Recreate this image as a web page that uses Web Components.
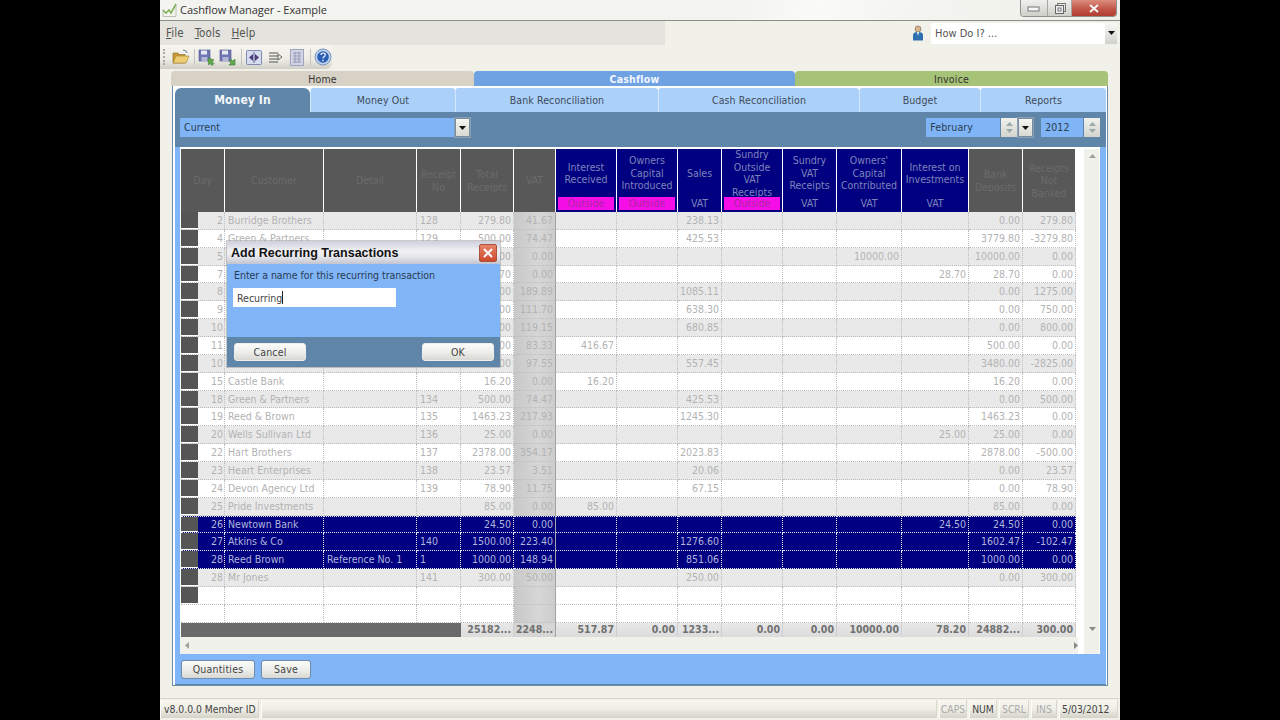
<!DOCTYPE html>
<html>
<head>
<meta charset="utf-8">
<title>Cashflow Manager</title>
<style>
html, body { margin: 0; padding: 0; background: #000; height: 720px; overflow: hidden; }
body { display: flex; justify-content: center; }
</style>
</head>
<body>
<cf-window>
  <cf-titlebar title="Cashflow Manager - Example"></cf-titlebar>
  <cf-menubar></cf-menubar>
  <cf-toolbar></cf-toolbar>
  <cf-modules></cf-modules>
  <cf-panel>
    <cf-subtabs></cf-subtabs>
    <cf-filterbar></cf-filterbar>
    <cf-grid></cf-grid>
    <cf-footer>
      <cf-button style="width:74px">Quantities</cf-button>
      <cf-button style="width:50px">Save</cf-button>
    </cf-footer>
  </cf-panel>
  <cf-status></cf-status>
  <cf-dialog heading="Add Recurring Transactions"></cf-dialog>
</cf-window>

<script>
// Shared look
const FONT = `"DejaVu Sans", "Liberation Sans", sans-serif`;
const ARROW_DOWN = `<svg width="7" height="4" viewBox="0 0 7 4"><path d="M0 0h7L3.5 4z" fill="#111"/></svg>`;

class CfWindow extends HTMLElement {
    constructor() {
        super();
        this.attachShadow({ mode: 'open' });
        this.shadowRoot.innerHTML = `
            <style>
                :host {
                    display: flex;
                    flex-direction: column;
                    position: relative;
                    width: 960px;
                    height: 720px;
                    background: #f2f1e9;
                    font-family: ${FONT};
                    font-stretch: condensed;
                    font-size: 10.5px;
                    color: #444;
                    overflow: hidden;
                }
            </style>
            <slot></slot>
        `;
    }
}

class CfTitlebar extends HTMLElement {
    constructor() {
        super();
        this.attachShadow({ mode: 'open' });
    }

    connectedCallback() {
        this.shadowRoot.innerHTML = `
            <style>
                :host {
                    display: flex;
                    align-items: flex-start;
                    height: 20px;
                    flex: none;
                    border-bottom: 1px solid #8c8c88;
                    background: linear-gradient(115deg, #f3f3ef 0 60%, #fafaf8 68%, #f4f4f0 78%, #efefea 100%);
                }
                .icon { margin: 3px 0 0 2px; width: 15px; height: 14px; flex: none; }
                .name {
                    margin: 2px 0 0 3px;
                    font: 11px/16px "Open Sans", sans-serif;
                    color: #333;
                    letter-spacing: -0.05px;
                }
                .controls {
                    display: flex;
                    margin-left: auto;
                    margin-right: 3px;
                    height: 16px;
                    border: 1px solid #8f8f8f;
                    border-top: none;
                    border-radius: 0 0 4px 4px;
                    overflow: hidden;
                }
                .controls div {
                    display: flex;
                    align-items: center;
                    justify-content: center;
                    background: linear-gradient(#f0f0ec, #cfcfca);
                    border-right: 1px solid #a5a5a2;
                }
                .min { width: 26px; }
                .max { width: 23px; }
                .controls .close {
                    width: 44px;
                    border: none;
                    background: linear-gradient(#dc8d7e, #c2574a 55%, #b03c30);
                }
            </style>
            <svg class="icon" viewBox="0 0 15 14">
                <path d="M1 13.5V7M1 13.5h13V2" fill="none" stroke="#bcbcb8"/>
                <path d="M1 7l3 3 3-3 2 3 5-9" fill="none" stroke="#7fb35a" stroke-width="1.6"/>
            </svg>
            <div class="name">${this.getAttribute('title')}</div>
            <div class="controls">
                <div class="min"><svg width="14" height="8"><rect x="1" y="3" width="11" height="4" fill="#f6f6f6" stroke="#777"/></svg></div>
                <div class="max"><svg width="12" height="11"><rect x="3.5" y=".5" width="8" height="8" fill="none" stroke="#777"/><rect x="1.5" y="2.5" width="8" height="8" fill="#eee" stroke="#666"/><rect x="4" y="5" width="3" height="3" fill="none" stroke="#777"/></svg></div>
                <div class="close"><svg width="12" height="9"><path d="M2 1l8 7M10 1l-8 7" stroke="#f4f4f4" stroke-width="2"/></svg></div>
            </div>
        `;
    }
}

class CfMenubar extends HTMLElement {
    constructor() {
        super();
        this.attachShadow({ mode: 'open' });
        this.shadowRoot.innerHTML = `
            <style>
                :host {
                    display: flex;
                    height: 24px;
                    flex: none;
                }
                .menus {
                    display: flex;
                    width: 505px;
                    flex: none;
                    padding-left: 6px;
                    box-sizing: border-box;
                    gap: 11px;
                    align-items: center;
                    background: #e4e3dd;
                    font-size: 11.5px;
                    letter-spacing: .1px;
                    color: #555;
                }
                u { text-decoration: underline; }
                .how {
                    display: flex;
                    flex: 1;
                    align-items: center;
                    background: #f2f1e9;
                }
                .person { margin-left: 246px; width: 14px; height: 16px; }
                .combo {
                    display: flex;
                    align-items: center;
                    margin-left: 6px;
                    width: 186px;
                    height: 21px;
                    background: #fff;
                    padding-left: 4px;
                    box-sizing: border-box;
                    font-size: 11px;
                    color: #555;
                }
                .arrow {
                    margin-left: auto;
                    width: 12px;
                    height: 21px;
                    display: flex;
                    align-items: center;
                    justify-content: center;
                    background: linear-gradient(#f8f8f6, #d2d2cc);
                }
            </style>
            <div class="menus">
                <span><u>F</u>ile</span><span><u>T</u>ools</span><span><u>H</u>elp</span>
            </div>
            <div class="how">
                <svg class="person" viewBox="0 0 14 16">
                    <circle cx="7" cy="4" r="3" fill="#d9b48c" stroke="#7a6248" stroke-width=".6"/>
                    <path d="M2 15.5V10q0-3 5-3t5 3v5.5z" fill="#2f6fb0"/>
                    <path d="M6 7h2l-1 4z" fill="#fff"/>
                </svg>
                <div class="combo">How Do I? ...<div class="arrow">${ARROW_DOWN}</div></div>
            </div>
        `;
    }
}

class CfToolbar extends HTMLElement {
    constructor() {
        super();
        this.attachShadow({ mode: 'open' });
        const saveIcon = (arrow) => `
            <svg width="18" height="17" viewBox="0 0 18 17">
                <rect x="1" y="1" width="11" height="11" fill="#6f76b4" stroke="#50558e" stroke-width=".6"/>
                <rect x="3" y="1.5" width="6" height="4" fill="#e6e8f2"/>
                <rect x="3.5" y="8" width="6" height="4" fill="#b4b8d6"/>
                <path d="${arrow}" fill="#5fa84c" stroke="#3d7c30" stroke-width=".6"/>
            </svg>`;
        this.shadowRoot.innerHTML = `
            <style>
                :host {
                    display: flex;
                    flex: none;
                    align-self: flex-start;
                    align-items: center;
                    box-sizing: border-box;
                    width: 172px;
                    height: 24px;
                    padding-left: 3px;
                    gap: 3px;
                    border-radius: 0 0 6px 0;
                    background: linear-gradient(#f6f5ef, #ecebe4 60%, #cfcfc8);
                }
                .grip { width: 2px; height: 16px; border-left: 2px dotted #aaa; margin-right: 3px; }
                .sep { width: 1px; height: 16px; background: #c4c4bc; margin: 0 1px; }
                svg { flex: none; }
            </style>
            <div class="grip"></div>
            <svg width="18" height="16" viewBox="0 0 18 16">
                <path d="M1 4h5l1 1.5h6V14H1z" fill="#c99a38" stroke="#8a6a20" stroke-width=".6"/>
                <path d="M11 1l3 1 1 2" fill="none" stroke="#6a7a90"/>
                <path d="M4 7h13l-3 7H1z" fill="#f0cd74" stroke="#a37f2c" stroke-width=".6"/>
            </svg>
            <div class="sep"></div>
            ${saveIcon('M10 9l6 2-2 1.5 2 2-2 2-2-2-1.5 1.5z')}
            ${saveIcon('M16 10v6h-6l2-2-2-2 2-1.5 2 1.5z')}
            <div class="sep"></div>
            <svg width="16" height="15" viewBox="0 0 16 15">
                <rect x=".5" y=".5" width="15" height="14" rx="1" fill="#d6dcef" stroke="#8089b4"/>
                <path d="M8 2v11" stroke="#5b648f"/>
                <path d="M7 4v7L3 7.5zM9 4v7l4-3.5z" fill="#4a3d7a"/>
            </svg>
            <svg style="margin-left:3px" width="15" height="15" viewBox="0 0 15 15">
                <path d="M1 3h9M1 6h9M1 9h9M1 12h9" stroke="#555" fill="none"/>
                <path d="M10 4l4 3-4 3z" fill="#eee" stroke="#333" stroke-width=".7"/>
            </svg>
            <svg style="margin-left:4px" width="14" height="17" viewBox="0 0 14 17">
                <rect x=".5" y=".5" width="13" height="16" fill="#d2d4e6" stroke="#a0a3bd"/>
                <path d="M3 4h8M3 7h8M3 10h8M3 13h8M5 3v11M9 3v11" stroke="#8f92b0" stroke-width=".8"/>
            </svg>
            <div class="sep" style="margin-left:3px"></div>
            <svg width="18" height="18" viewBox="0 0 18 18">
                <circle cx="9" cy="9" r="8" fill="#bcd0ea" stroke="#7d98bf"/>
                <circle cx="9" cy="9" r="5.8" fill="#2a5fb4"/>
                <path d="M7 7q0-2 2.2-2T11.2 7q0 1.2-1.2 1.8T9 10.5" fill="none" stroke="#fff" stroke-width="1.2"/>
                <circle cx="9" cy="12.5" r=".8" fill="#fff"/>
            </svg>
        `;
    }
}

class CfModules extends HTMLElement {
    constructor() {
        super();
        this.attachShadow({ mode: 'open' });
        this.shadowRoot.innerHTML = `
            <style>
                :host {
                    display: grid;
                    flex: none;
                    grid-template-columns: 303px 321px 313px;
                    height: 15px;
                    margin: 2px 0 0 11px;
                }
                div {
                    display: flex;
                    align-items: center;
                    justify-content: center;
                    border-radius: 4px 4px 0 0;
                    letter-spacing: .2px;
                    color: #333;
                }
                .home { background: #d8d1c5; }
                .cash { background: #6fa2e2; color: #f2f6ff; font-weight: bold; }
                .inv { background: #a7c378; }
            </style>
            <div class="home">Home</div>
            <div class="cash">Cashflow</div>
            <div class="inv">Invoice</div>
        `;
    }
}

class CfPanel extends HTMLElement {
    constructor() {
        super();
        this.attachShadow({ mode: 'open' });
        this.shadowRoot.innerHTML = `
            <style>
                :host {
                    display: flex;
                    flex-direction: column;
                    flex: none;
                    box-sizing: border-box;
                    width: 936px;
                    height: 600px;
                    margin-left: 12px;
                    padding: 2px 1px 0 2px;
                    border: 1px solid #6a8fae;
                    border-top: none;
                    background: #fff;
                }
            </style>
            <slot></slot>
        `;
    }
}

class CfSubtabs extends HTMLElement {
    constructor() {
        super();
        this.attachShadow({ mode: 'open' });
        const names = ['Money Out', 'Bank Reconciliation', 'Cash Reconciliation', 'Budget', 'Reports'];
        this.shadowRoot.innerHTML = `
            <style>
                :host {
                    display: grid;
                    flex: none;
                    grid-template-columns: 135px 145px 203px 201px 121px 1fr;
                    height: 24px;
                    background: #fff;
                }
                div {
                    display: flex;
                    align-items: center;
                    justify-content: center;
                    background: #abd1fb;
                    letter-spacing: .1px;
                    color: #3e4a58;
                    border-left: 1px solid #d5e6fc;
                    border-radius: 3px 3px 0 0;
                }
                .on {
                    background: #5f86a9;
                    color: #f3f6fa;
                    font-weight: bold;
                    font-size: 12px;
                    border: none;
                    border-radius: 6px 6px 0 0;
                }
            </style>
            <div class="on">Money In</div>
            ${names.map(n => `<div>${n}</div>`).join('')}
        `;
    }
}

class CfFilterbar extends HTMLElement {
    constructor() {
        super();
        this.attachShadow({ mode: 'open' });
        const spin = `<div class="spin"><svg width="7" height="4"><path d="M0 4h7L3.5 0z" fill="#9aa"/></svg><svg width="7" height="4"><path d="M0 0h7L3.5 4z" fill="#9aa"/></svg></div>`;
        this.shadowRoot.innerHTML = `
            <style>
                :host {
                    display: flex;
                    flex: none;
                    align-items: flex-start;
                    box-sizing: border-box;
                    height: 35px;
                    padding: 6px 6px 0 5px;
                    background: #5f86a9;
                }
                .field {
                    display: flex;
                    align-items: center;
                    height: 19px;
                    padding: 0 0 1px 4px;
                    box-sizing: border-box;
                    background: #7fb5f6;
                    color: #2c3c50;
                    letter-spacing: .1px;
                    border-right: 1px solid #5f86a9;
                }
                .cur { width: 276px; }
                .drop {
                    display: flex;
                    align-items: center;
                    justify-content: center;
                    width: 15px;
                    height: 19px;
                    box-sizing: border-box;
                    border: 1px solid #7d8c98;
                    background: linear-gradient(#f6f6f2, #d9d9d2);
                    box-shadow: 0 0 0 1px #86a2ba;
                }
                .spin {
                    display: flex;
                    flex-direction: column;
                    align-items: center;
                    justify-content: center;
                    gap: 3px;
                    width: 16px;
                    height: 19px;
                    background: linear-gradient(#f0f0ec, #d5d5d0);
                }
                .month { width: 75px; margin-left: 456px; }
                .year { width: 43px; margin-left: 8px; }
            </style>
            <div class="field cur">Current</div>
            <div class="drop">${ARROW_DOWN}</div>
            <div class="field month">February</div>
            ${spin}
            <div class="drop" style="margin-left:1px">${ARROW_DOWN}</div>
            <div class="field year">2012</div>
            ${spin}
        `;
    }
}

// Column widths of the receipts table, left to right
const COLS = [44, 99, 93, 44, 53, 42, 61, 61, 44, 61, 54, 65, 67, 54, 53];
const HEADS = [
    ['Day'], ['Customer'], ['Detail'], ['Receipt<br>No'], ['Total<br>Receipts'], ['VAT'],
    ['Interest<br>Received', 'Outside'], ['Owners<br>Capital<br>Introduced', 'Outside'], ['Sales', 'VAT'],
    ['Sundry<br>Outside<br>VAT<br>Receipts', 'Outside'], ['Sundry<br>VAT<br>Receipts', 'VAT'],
    ['Owners\'<br>Capital<br>Contributed', 'VAT'], ['Interest on<br>Investments', 'VAT'],
    ['Bank<br>Deposits'], ['Receipts<br>Not<br>Banked']
];
// day, customer, detail, receipt, total, vat, six spare columns by name, bank, not banked
const ROWS = [
    ['2', 'Burridge Brothers', '', '128', '279.80', '41.67', {s: '238.13'}, '0.00', '279.80'],
    ['4', 'Green & Partners', '', '129', '500.00', '74.47', {s: '425.53'}, '3779.80', '-3279.80'],
    ['5', '', '', '', '00', '0.00', {c: '10000.00'}, '10000.00', '0.00'],
    ['7', '', '', '', '70', '0.00', {n: '28.70'}, '28.70', '0.00'],
    ['8', '', '', '', '00', '189.89', {s: '1085.11'}, '0.00', '1275.00'],
    ['9', '', '', '', '00', '111.70', {s: '638.30'}, '0.00', '750.00'],
    ['10', '', '', '', '00', '119.15', {s: '680.85'}, '0.00', '800.00'],
    ['11', '', '', '', '00', '83.33', {i: '416.67'}, '500.00', '0.00'],
    ['10', '', '', '', '00', '97.55', {s: '557.45'}, '3480.00', '-2825.00'],
    ['15', 'Castle Bank', '', '', '16.20', '0.00', {i: '16.20'}, '16.20', '0.00'],
    ['18', 'Green & Partners', '', '134', '500.00', '74.47', {s: '425.53'}, '0.00', '500.00'],
    ['19', 'Reed & Brown', '', '135', '1463.23', '217.93', {s: '1245.30'}, '1463.23', '0.00'],
    ['20', 'Wells Sullivan Ltd', '', '136', '25.00', '0.00', {n: '25.00'}, '25.00', '0.00'],
    ['22', 'Hart Brothers', '', '137', '2378.00', '354.17', {s: '2023.83'}, '2878.00', '-500.00'],
    ['23', 'Heart Enterprises', '', '138', '23.57', '3.51', {s: '20.06'}, '0.00', '23.57'],
    ['24', 'Devon Agency Ltd', '', '139', '78.90', '11.75', {s: '67.15'}, '0.00', '78.90'],
    ['25', 'Pride Investments', '', '', '85.00', '0.00', {i: '85.00'}, '85.00', '0.00'],
    ['26', 'Newtown Bank', '', '', '24.50', '0.00', {n: '24.50'}, '24.50', '0.00', 'sel first'],
    ['27', 'Atkins & Co', '', '140', '1500.00', '223.40', {s: '1276.60'}, '1602.47', '-102.47', 'sel'],
    ['28', 'Reed Brown', 'Reference No. 1', '1', '1000.00', '148.94', {s: '851.06'}, '1000.00', '0.00', 'sel'],
    ['28', 'Mr Jones', '', '141', '300.00', '50.00', {s: '250.00'}, '0.00', '300.00'],
    ['', '', '', '', '', '', {}, '', ''],
    null
];
const TOTALS = ['25182...', '2248...', '517.87', '0.00', '1233...', '0.00', '0.00', '10000.00', '78.20', '24882...', '300.00'];

class CfGrid extends HTMLElement {
    constructor() {
        super();
        this.attachShadow({ mode: 'open' });
    }

    connectedCallback() {
        this.render();
    }

    render() {
        const heads = HEADS.map(([label, tag]) => {
            if (!tag) return `<div class="hd grey">${label}</div>`;
            const badge = tag === 'Outside' ? 'pill' : 'vat';
            return `<div class="hd navy"><div class="lbl">${label}</div><div class="${badge}">${tag}</div></div>`;
        }).join('');

        const body = ROWS.map((row, r) => {
            const cells = row
                ? [...row.slice(0, 6), row[6].i, '', row[6].s, '', '', row[6].c, row[6].n, row[7], row[8]]
                : new Array(15).fill('');
            const stripe = row && row[9] ? row[9] : (r % 2 === 0 && r < 21 ? 'odd' : 'even');
            return cells.map((v, c) => {
                const text = (v || '').replace('&', '&amp;');
                if (c === 0) {
                    return `<div class="c ${stripe} day">${row ? '<i></i>' : ''}<span>${text}</span></div>`;
                }
                const align = c === 1 || c === 2 || c === 3 ? 'left' : 'right';
                const vat = c === 5 ? 'vatcol' : '';
                return `<div class="c ${stripe} ${align} ${vat}">${text}</div>`;
            }).join('');
        }).join('');

        const totals = TOTALS.map((t, i) => `<div class="tot ${i === 1 ? 'vatcol' : ''}">${t}</div>`).join('');

        this.shadowRoot.innerHTML = `
            <style>
                :host {
                    display: grid;
                    flex: none;
                    grid-template-columns: 895px 1fr;
                    grid-template-rows: 488px 17px;
                    box-sizing: border-box;
                    width: 920px;
                    height: 507px;
                    margin-left: 5px;
                    padding: 2px 0 0 1px;
                    background: #fff;
                    box-shadow: -5px 0 0 #80b5f8, 6px 0 0 #80b5f8;
                }
                .table {
                    grid-column: 1;
                    grid-row: 1;
                    display: grid;
                    grid-template-columns: ${COLS.map(w => w + 'px').join(' ')};
                    grid-template-rows: 63px repeat(23, 17.86px) 14.2px;
                    overflow: hidden;
                    line-height: 12.5px;
                }
                .hd {
                    box-sizing: border-box;
                    margin-right: 1px;
                    text-align: center;
                    overflow: hidden;
                    display: flex;
                    flex-direction: column;
                    align-items: center;
                    justify-content: center;
                }
                .grey { background: #585858; color: #6b6b6b; }
                .navy { background: #000080; color: #7e83bb; justify-content: flex-start; }
                .lbl {
                    height: 48px;
                    flex: none;
                    display: flex;
                    align-items: center;
                    justify-content: center;
                    white-space: nowrap;
                }
                .pill {
                    position: relative;
                    align-self: stretch;
                    margin: 0 2px;
                    height: 13px;
                    background: #f60ee6;
                    color: #a8289f;
                    line-height: 13px;
                }
                .vat { line-height: 13px; height: 13px; }
                .c {
                    box-sizing: border-box;
                    border-right: 1px dotted #bdbdbd;
                    border-bottom: 1px dotted #bdbdbd;
                    line-height: 16px;
                    white-space: nowrap;
                    overflow: hidden;
                    color: #b3b3b3;
                }
                .odd { background: #e9e9e9; }
                .even { background: #fff; }
                .sel {
                    background: #000080;
                    color: #b0b5dc;
                    border-right-color: #e2e5ff;
                    border-bottom-color: #e2e5ff;
                }
                .first { border-top: 1px dotted #e2e5ff; line-height: 14px; }
                .left { padding-left: 3px; }
                .right { padding-right: 2px; text-align: right; }
                .vatcol {
                    background: linear-gradient(90deg, #c8c8c8, #d6d6d6 60%, #cdcdcd);
                    border-right: 1px solid #a2a2a2;
                }
                .sel.vatcol { background: #000080; }
                .day { display: flex; padding-right: 1px; }
                .day i {
                    width: 17px;
                    flex: none;
                    background: #555;
                    border-bottom: 1px solid #fff;
                }
                .day span { flex: 1; text-align: right; }
                .tblank { grid-column: span 4; background: #6a6a6a; }
                .tot {
                    display: flex;
                    align-items: center;
                    justify-content: flex-end;
                    box-sizing: border-box;
                    padding: 0 2px 1px 0;
                    background: linear-gradient(#e8e8e8, #dcdcdc);
                    border-right: 1px solid #cfcfcf;
                    font-weight: bold;
                    font-size: 10.5px;
                    color: #707070;
                    white-space: nowrap;
                }
                .tot.vatcol { background: #d6d6d6; border-right: 1px solid #a2a2a2; }
                .vbar {
                    grid-column: 2;
                    grid-row: 1 / 3;
                    margin-left: 8px;
                    margin-right: 1px;
                    background: #f1f1ec;
                    display: flex;
                    flex-direction: column;
                    justify-content: space-between;
                    align-items: center;
                    padding: 5px 0 23px 2px;
                    box-sizing: border-box;
                }
                .hbar {
                    grid-column: 1;
                    grid-row: 2;
                    display: flex;
                    justify-content: space-between;
                    align-items: center;
                    padding: 0 0 0 5px;
                    background: #f1f1ec;
                    margin: 0 -2px 0 -1px;
                }
            </style>
            <div class="table">
                ${heads}
                ${body}
                <div class="tblank"></div>
                ${totals}
            </div>
            <div class="vbar">
                <svg width="7" height="4"><path d="M0 4h7L3.5 0z" fill="#a0a0a0"/></svg>
                <svg width="7" height="4"><path d="M0 0h7L3.5 4z" fill="#8a8a8a"/></svg>
            </div>
            <div class="hbar">
                <svg width="4" height="7"><path d="M4 0v7L0 3.5z" fill="#a0a0a0"/></svg>
                <svg width="4" height="7"><path d="M0 0v7l4-3.5z" fill="#8a8a8a"/></svg>
            </div>
        `;
    }
}

class CfFooter extends HTMLElement {
    constructor() {
        super();
        this.attachShadow({ mode: 'open' });
        this.shadowRoot.innerHTML = `
            <style>
                :host {
                    display: flex;
                    flex: 1;
                    gap: 6px;
                    align-items: flex-start;
                    padding: 6px 0 0 6px;
                    background: #80b5f8;
                    border-bottom: 1px solid #5f86a9;
                }
            </style>
            <slot></slot>
        `;
    }
}

class CfButton extends HTMLElement {
    constructor() {
        super();
        this.attachShadow({ mode: 'open' });
        this.shadowRoot.innerHTML = `
            <style>
                :host {
                    display: flex;
                    align-items: center;
                    justify-content: center;
                    box-sizing: border-box;
                    height: 19px;
                    padding-bottom: 1px;
                    border: 1px solid #6f8cab;
                    border-radius: 3px;
                    background: linear-gradient(#fbfbfa, #eeeeeb 50%, #d7d7d3);
                    color: #444;
                    letter-spacing: .2px;
                }
            </style>
            <slot></slot>
        `;
    }
}

class CfStatus extends HTMLElement {
    constructor() {
        super();
        this.attachShadow({ mode: 'open' });
        this.shadowRoot.innerHTML = `
            <style>
                :host {
                    display: flex;
                    flex: none;
                    gap: 2px;
                    box-sizing: border-box;
                    height: 21px;
                    margin-top: 12px;
                    padding-top: 1px;
                    border-top: 1px solid #d8d6c8;
                    font-size: 10.3px;
                }
                div {
                    display: flex;
                    align-items: center;
                    justify-content: center;
                    height: 18px;
                    box-sizing: border-box;
                    background: linear-gradient(#f7f6f0, #efeee6 50%, #d4d3c8);
                    border-right: 1px solid #d8d7cc;
                    border-left: 1px solid #fbfbf8;
                    color: #aaa;
                }
                .ver { width: 99px; justify-content: flex-start; padding-left: 3px; color: #444; }
                .fill { flex: 1; }
                .on { color: #444; }
            </style>
            <div class="ver">v8.0.0.0 Member ID</div>
            <div class="fill"></div>
            <div style="width:28px">CAPS</div>
            <div class="on" style="width:28px">NUM</div>
            <div style="width:30px">SCRL</div>
            <div style="width:26px">INS</div>
            <div class="on" style="width:59px;margin-right:2px;justify-content:flex-start;padding-left:2px">5/03/2012</div>
        `;
    }
}

class CfDialog extends HTMLElement {
    constructor() {
        super();
        this.attachShadow({ mode: 'open' });
    }

    connectedCallback() {
        this.shadowRoot.innerHTML = `
            <style>
                :host {
                    position: absolute;
                    left: 67px;
                    top: 241px;
                    width: 273px;
                    height: 126px;
                    display: flex;
                    flex-direction: column;
                    background: #80b5f8;
                    box-shadow: 0 0 0 1px rgba(150, 150, 150, .5);
                }
                .head {
                    display: flex;
                    align-items: center;
                    height: 23px;
                    flex: none;
                    padding: 0 3px 0 4px;
                    background: linear-gradient(#cfcfdc, #f2f2f6 45%, #e4e4ea 70%, #c4c4d0);
                    font: bold 12.5px "Liberation Sans", sans-serif;
                    color: #111;
                }
                .x {
                    display: flex;
                    align-items: center;
                    justify-content: center;
                    margin-left: auto;
                    width: 18px;
                    height: 18px;
                    box-sizing: border-box;
                    border: 1px solid #a8533a;
                    border-radius: 2px;
                    background: linear-gradient(#e8866a, #cc4a2c);
                }
                .body { flex: 1; padding: 5px 7px 0 7px; color: #2a3a50; letter-spacing: -.03px; }
                .input {
                    display: flex;
                    align-items: center;
                    width: 163px;
                    height: 19px;
                    margin: 7px 0 0 -1px;
                    padding-left: 4px;
                    box-sizing: border-box;
                    background: #fff;
                    color: #444;
                    letter-spacing: 0;
                }
                .caret { width: 1px; height: 13px; background: #222; }
                .foot {
                    display: flex;
                    justify-content: space-between;
                    flex: none;
                    height: 30px;
                    padding: 6px 6px 0 7px;
                    box-sizing: border-box;
                    background: #5f86a9;
                }
                cf-button { width: 72px; height: 18px; border-color: #eee; }
            </style>
            <div class="head">
                ${this.getAttribute('heading')}
                <div class="x"><svg width="10" height="10"><path d="M1 1l8 8M9 1l-8 8" stroke="#fff" stroke-width="2"/></svg></div>
            </div>
            <div class="body">
                Enter a name for this recurring transaction
                <div class="input">Recurring<div class="caret"></div></div>
            </div>
            <div class="foot">
                <cf-button>Cancel</cf-button>
                <cf-button>OK</cf-button>
            </div>
        `;
    }
}

customElements.define('cf-window', CfWindow);
customElements.define('cf-titlebar', CfTitlebar);
customElements.define('cf-menubar', CfMenubar);
customElements.define('cf-toolbar', CfToolbar);
customElements.define('cf-modules', CfModules);
customElements.define('cf-panel', CfPanel);
customElements.define('cf-subtabs', CfSubtabs);
customElements.define('cf-filterbar', CfFilterbar);
customElements.define('cf-grid', CfGrid);
customElements.define('cf-footer', CfFooter);
customElements.define('cf-button', CfButton);
customElements.define('cf-status', CfStatus);
customElements.define('cf-dialog', CfDialog);
</script>
</body>
</html>
